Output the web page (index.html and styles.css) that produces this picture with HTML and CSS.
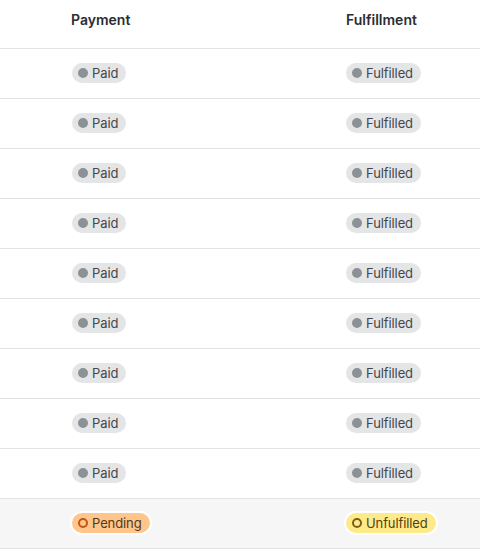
FILE: index.html
```html
<!DOCTYPE html>
<html>
<head>
<meta charset="utf-8">
<link rel="stylesheet" href="styles.css">
</head>
<body>
<div class="table">
  <div class="head">
    <div class="th">Payment</div>
    <div class="th">Fulfillment</div>
  </div>
  <div class="row"><div class="cell"><span class="badge"><span class="pip"></span>Paid</span></div><div class="cell"><span class="badge"><span class="pip"></span>Fulfilled</span></div></div>
  <div class="row"><div class="cell"><span class="badge"><span class="pip"></span>Paid</span></div><div class="cell"><span class="badge"><span class="pip"></span>Fulfilled</span></div></div>
  <div class="row"><div class="cell"><span class="badge"><span class="pip"></span>Paid</span></div><div class="cell"><span class="badge"><span class="pip"></span>Fulfilled</span></div></div>
  <div class="row"><div class="cell"><span class="badge"><span class="pip"></span>Paid</span></div><div class="cell"><span class="badge"><span class="pip"></span>Fulfilled</span></div></div>
  <div class="row"><div class="cell"><span class="badge"><span class="pip"></span>Paid</span></div><div class="cell"><span class="badge"><span class="pip"></span>Fulfilled</span></div></div>
  <div class="row"><div class="cell"><span class="badge"><span class="pip"></span>Paid</span></div><div class="cell"><span class="badge"><span class="pip"></span>Fulfilled</span></div></div>
  <div class="row"><div class="cell"><span class="badge"><span class="pip"></span>Paid</span></div><div class="cell"><span class="badge"><span class="pip"></span>Fulfilled</span></div></div>
  <div class="row"><div class="cell"><span class="badge"><span class="pip"></span>Paid</span></div><div class="cell"><span class="badge"><span class="pip"></span>Fulfilled</span></div></div>
  <div class="row"><div class="cell"><span class="badge"><span class="pip"></span>Paid</span></div><div class="cell"><span class="badge"><span class="pip"></span>Fulfilled</span></div></div>
  <div class="row hovered"><div class="cell"><span class="badge warning"><span class="pip ring"></span>Pending</span></div><div class="cell"><span class="badge attention"><span class="pip ring"></span>Unfulfilled</span></div></div>
</div>
</body>
</html>
```
FILE: styles.css
```css
* { box-sizing: border-box; }
html, body { margin: 0; padding: 0; background: #ffffff; }
body {
  font-family: Inter, "Noto Sans", sans-serif;
  font-size: 13px;
  color: #202223;
  -webkit-font-smoothing: antialiased;
}
.table { width: 480px; }
.head {
  display: grid;
  grid-template-columns: 275px 1fr;
  padding-left: 71px;
  height: 49px;
  padding-top: 10px;
  border-bottom: 1px solid #e1e3e5;
}
.th {
  font-weight: 600;
  line-height: 20px;
  font-size: 14px;
  color: #2a2d31;
}
.row {
  display: grid;
  grid-template-columns: 274px 1fr;
  padding-left: 70px;
  height: 50px;
  padding-bottom: 1px;
  align-items: center;
  border-bottom: 1px solid #e1e3e5;
}
.row.hovered { background: #f6f6f7; }
.cell { display: flex; align-items: center; }
.badge {
  display: inline-flex;
  align-items: center;
  padding: 2px 8px 2px 8px;
  border: 2px solid #ffffff;
  border-radius: 20px;
  background: #e4e5e7;
  color: #44474a;
  font-size: 13px;
  line-height: 16px;
  letter-spacing: -0.1px;
}
.pip {
  width: 10px;
  height: 10px;
  border-radius: 50%;
  border: 2px solid #8c9196;
  background: #8c9196;
  margin: 0 4px 0 -2px;
  flex: none;
}
.pip.ring { background: transparent; }
.badge.warning { background: #ffc58b; color: #4f3a1e; }
.badge.warning .pip { border-color: #c05717; }
.badge.attention { background: #ffea8a; color: #4f4312; }
.badge.attention .pip { border-color: #7a5f1a; }
```
